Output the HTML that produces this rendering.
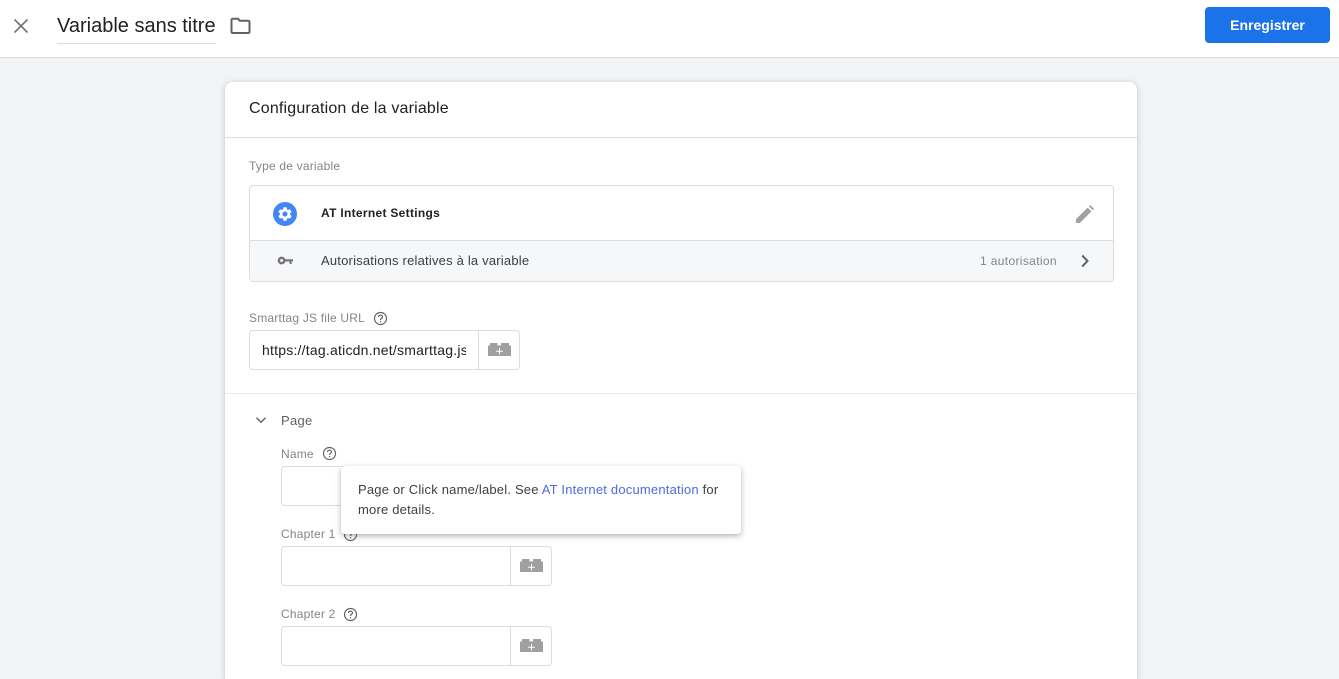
<!DOCTYPE html>
<html><head><meta charset="utf-8">
<style>
html,body{margin:0;padding:0;width:1339px;height:679px;overflow:hidden;background:#f1f3f4;font-family:"Liberation Sans",sans-serif;color:#202124}
.a{position:absolute;white-space:nowrap}
svg{position:absolute;display:block}
.box{position:absolute;box-sizing:border-box;border:1px solid #dadce0;border-radius:4px;background:#fff}
.lab{font-size:12px;color:#80868b;letter-spacing:.2px;line-height:16px}
.sep{position:absolute;top:0;bottom:0;width:1px;background:#dadce0}
</style></head><body>
<div class="a" style="left:0;top:0;width:1339px;height:58px;background:#fff;border-bottom:1px solid #dadce0;box-sizing:border-box"></div>
<svg style="left:12px;top:17px" width="18" height="18" viewBox="0 0 18 18"><path d="M2.5 2.5L15.5 15.5M15.5 2.5L2.5 15.5" stroke="#757575" stroke-width="1.7" fill="none"/></svg>
<div class="a" style="left:57px;top:14px;font-size:20px;line-height:24px;color:#202124;width:159px;overflow:hidden">Variable sans titre</div>
<div class="a" style="left:57px;top:43px;width:159px;height:1px;background:#dadce0"></div>
<svg style="left:230px;top:17px" width="21" height="18" viewBox="0 0 21 18"><path d="M2.5 1.8H8L9.8 3.8H18.5A1.2 1.2 0 0 1 19.5 5V15A1.2 1.2 0 0 1 18.5 16H2.5A1.2 1.2 0 0 1 1.5 15V2.8A1.2 1.2 0 0 1 2.5 1.8Z" fill="none" stroke="#5f6368" stroke-width="2"/></svg>
<div class="a" style="left:1205px;top:7px;width:125px;height:36px;background:#1a73e8;border-radius:4px;color:#fff;font-size:14px;font-weight:bold;line-height:36px;text-align:center;letter-spacing:0">Enregistrer</div>

<div class="a" style="left:225px;top:82px;width:912px;height:597px;background:#fff;border-radius:8px 8px 0 0;box-shadow:0 1px 6px rgba(60,64,67,.28)"></div>
<div class="a" style="left:249px;top:99px;font-size:16px;line-height:20px;color:#202124;letter-spacing:.18px">Configuration de la variable</div>
<div class="a" style="left:225px;top:137px;width:912px;height:1px;background:#dadce0"></div>
<div class="a lab" style="left:249px;top:158px;letter-spacing:.2px">Type de variable</div>

<div class="box" style="left:249px;top:185px;width:865px;height:97px;overflow:hidden">
  <div class="a" style="left:0;top:54px;width:863px;height:41px;background:#f6f7f9;border-top:1px solid #dadce0"></div>
</div>
<svg style="left:273px;top:202px" width="24" height="24" viewBox="0 0 24 24"><circle cx="12" cy="12" r="12" fill="#4285f4"/><g transform="translate(3.6 3.6) scale(.7)"><path fill="#fff" fill-rule="evenodd" d="M19.14 12.94c.04-.3.06-.61.06-.94 0-.32-.02-.64-.07-.94l2.03-1.58c.18-.14.23-.41.12-.61l-1.92-3.32c-.12-.22-.37-.29-.59-.22l-2.39.96c-.5-.38-1.03-.7-1.62-.94l-.36-2.54c-.04-.24-.24-.41-.48-.41h-3.84c-.24 0-.43.17-.47.41l-.36 2.54c-.59.24-1.13.57-1.62.94l-2.39-.96c-.22-.08-.47 0-.59.22L2.74 8.87c-.12.21-.08.47.12.61l2.03 1.58c-.05.3-.09.63-.09.94s.02.64.07.94l-2.03 1.58c-.18.14-.23.41-.12.61l1.92 3.32c.12.22.37.29.59.22l2.39-.96c.5.38 1.03.7 1.62.94l.36 2.54c.05.24.24.41.48.41h3.84c.24 0 .44-.17.47-.41l.36-2.54c.59-.24 1.13-.56 1.62-.94l2.39.96c.22.08.47 0 .59-.22l1.92-3.32c.12-.22.07-.47-.12-.61l-2.01-1.58zM12 15.6c-1.98 0-3.6-1.62-3.6-3.6s1.62-3.6 3.6-3.6 3.6 1.62 3.6 3.6-1.62 3.6-3.6 3.6z"/></g></svg>
<div class="a" style="left:321px;top:205px;font-size:12px;font-weight:bold;line-height:16px;letter-spacing:.3px;color:#202124">AT Internet Settings</div>
<svg style="left:1075px;top:204px" width="20" height="20" viewBox="0 0 20 20"><path d="M1 19V15.2L12.6 3.6L16.4 7.4L4.8 19ZM13.9 2.3L15.2 1L19 4.8L17.7 6.1Z" fill="#a0a0a0"/></svg>
<svg style="left:277px;top:255px" width="17" height="11" viewBox="0 0 17 11"><circle cx="4.6" cy="5.5" r="2.7" fill="none" stroke="#757575" stroke-width="2.4"/><path d="M7 4.3H16V6.5H14.6V9H12.6V6.5H7Z" fill="#757575"/></svg>
<div class="a" style="left:321px;top:253px;font-size:13px;line-height:16px;letter-spacing:.2px;color:#3c4043">Autorisations relatives à la variable</div>
<div class="a" style="left:980px;top:253px;font-size:12px;line-height:16px;letter-spacing:.35px;color:#80868b">1 autorisation</div>
<svg style="left:1080px;top:254px" width="10" height="14" viewBox="0 0 10 14"><path d="M2.2 1.5L7.5 7L2.2 12.5" fill="none" stroke="#5f6368" stroke-width="2"/></svg>

<div class="a lab" style="left:249px;top:310px">Smarttag JS file URL</div>
<svg style="left:373px;top:311px" width="15" height="15" viewBox="0 0 15 15"><circle cx="7.5" cy="7.5" r="6" fill="none" stroke="#5f6368" stroke-width="1.2"/><path d="M5.5 6C5.5 4.8 6.4 4.2 7.5 4.2S9.5 4.9 9.5 5.9C9.5 7.2 7.5 7.3 7.5 8.9" fill="none" stroke="#5f6368" stroke-width="1.2"/><rect x="6.9" y="10" width="1.2" height="1.3" fill="#5f6368"/></svg>
<div class="box" style="left:249px;top:330px;width:271px;height:40px"><div class="sep" style="left:228px"></div>
<div class="a" style="left:12px;top:10px;width:204px;overflow:hidden;font-size:14px;line-height:19px;color:#202124;letter-spacing:.22px">https://tag.aticdn.net/smarttag.js</div></div>
<svg style="left:488px;top:343px" width="23" height="14" viewBox="0 0 23 14"><path d="M0 2.5H2V0H9.5V2.5H13V0H21V2.5H23V13H0Z" fill="#a0a0a0"/><path d="M11.5 5V11.5M8 8.2H15" stroke="#fff" stroke-width="1"/></svg>

<div class="a" style="left:225px;top:393px;width:912px;height:1px;background:#e8eaed"></div>
<svg style="left:255px;top:416px" width="12" height="9" viewBox="0 0 12 9"><path d="M1.5 1.8L6 6.3L10.5 1.8" fill="none" stroke="#5f6368" stroke-width="1.4"/></svg>
<div class="a" style="left:281px;top:413px;font-size:13px;line-height:16px;font-weight:normal;color:#5f6368;letter-spacing:.3px">Page</div>

<div class="a lab" style="left:281px;top:446px">Name</div>
<svg style="left:322px;top:446px" width="15" height="15" viewBox="0 0 15 15"><circle cx="7.5" cy="7.5" r="6" fill="none" stroke="#5f6368" stroke-width="1.2"/><path d="M5.5 6C5.5 4.8 6.4 4.2 7.5 4.2S9.5 4.9 9.5 5.9C9.5 7.2 7.5 7.3 7.5 8.9" fill="none" stroke="#5f6368" stroke-width="1.2"/><rect x="6.9" y="10" width="1.2" height="1.3" fill="#5f6368"/></svg>
<div class="box" style="left:281px;top:466px;width:271px;height:40px"><div class="sep" style="left:228px"></div></div>

<div class="a lab" style="left:281px;top:526px">Chapter 1</div>
<svg style="left:343px;top:527px" width="15" height="15" viewBox="0 0 15 15"><circle cx="7.5" cy="7.5" r="6" fill="none" stroke="#5f6368" stroke-width="1.2"/><path d="M5.5 6C5.5 4.8 6.4 4.2 7.5 4.2S9.5 4.9 9.5 5.9C9.5 7.2 7.5 7.3 7.5 8.9" fill="none" stroke="#5f6368" stroke-width="1.2"/><rect x="6.9" y="10" width="1.2" height="1.3" fill="#5f6368"/></svg>
<div class="box" style="left:281px;top:546px;width:271px;height:40px"><div class="sep" style="left:228px"></div></div>
<svg style="left:520px;top:559px" width="23" height="14" viewBox="0 0 23 14"><path d="M0 2.5H2V0H9.5V2.5H13V0H21V2.5H23V13H0Z" fill="#a0a0a0"/><path d="M11.5 5V11.5M8 8.2H15" stroke="#fff" stroke-width="1"/></svg>

<div class="a lab" style="left:281px;top:606px">Chapter 2</div>
<svg style="left:343px;top:607px" width="15" height="15" viewBox="0 0 15 15"><circle cx="7.5" cy="7.5" r="6" fill="none" stroke="#5f6368" stroke-width="1.2"/><path d="M5.5 6C5.5 4.8 6.4 4.2 7.5 4.2S9.5 4.9 9.5 5.9C9.5 7.2 7.5 7.3 7.5 8.9" fill="none" stroke="#5f6368" stroke-width="1.2"/><rect x="6.9" y="10" width="1.2" height="1.3" fill="#5f6368"/></svg>
<div class="box" style="left:281px;top:626px;width:271px;height:40px"><div class="sep" style="left:228px"></div></div>
<svg style="left:520px;top:639px" width="23" height="14" viewBox="0 0 23 14"><path d="M0 2.5H2V0H9.5V2.5H13V0H21V2.5H23V13H0Z" fill="#a0a0a0"/><path d="M11.5 5V11.5M8 8.2H15" stroke="#fff" stroke-width="1"/></svg>

<div class="a" style="left:341px;top:466px;width:400px;height:68px;background:#fff;border-radius:4px;box-shadow:0 2px 6px rgba(60,64,67,.4)"></div>
<div class="a" style="left:358px;top:480px;font-size:13px;line-height:20px;letter-spacing:.2px;color:#3c4043">Page or Click name/label. See <span style="color:#4a6cdc">AT Internet documentation</span> for<br>more details.</div>
</body></html>
